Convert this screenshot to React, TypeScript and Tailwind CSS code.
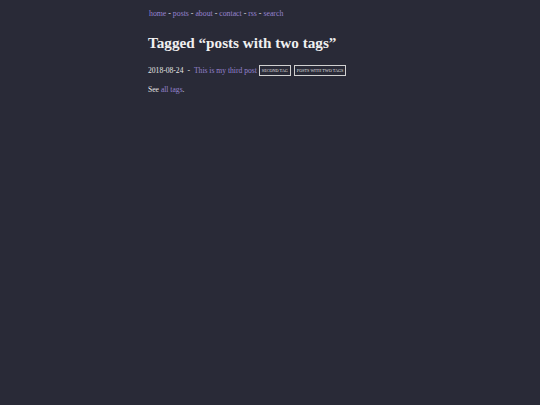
import React from "react";

const nav = ["home", "posts", "about", "contact", "rss", "search"];

function Tag({ label }: { label: string }) {
  return (
    <a className="inline-block border border-[#d0d0d0] px-[2px] py-[1px] leading-[7px] text-[4.2px] uppercase text-[#e0e0e0]">
      {label}
    </a>
  );
}

export default function App() {
  return (
    <div
      className="min-h-[405px] w-full bg-[#292a37] text-[#e4e4e4]"
      style={{ fontFamily: '"Liberation Serif", "Times New Roman", serif' }}
    >
      <div className="mx-auto w-[244px] pt-[8px] text-[7.6px]">
        <nav className="pl-[1px] text-[7.8px] leading-[11px]">
          {nav.map((item, i) => (
            <span key={item}>
              <a className="text-[#9683cf]">{item}</a>
              {i < nav.length - 1 && <span> - </span>}
            </span>
          ))}
        </nav>
        <h1 className="mt-[14px] text-[15.2px] font-bold leading-[20px] text-[#f0f0f0]">
          Tagged “posts with two tags”
        </h1>
        <ul className="mt-[12px]">
          <li className="flex items-center leading-[11px]">
            <span>2018-08-24</span>
            <span className="mx-[4px]">-</span>
            <a className="mr-[2px] text-[#9683cf]">This is my third post</a>
            <span className="flex gap-[3px]">
              <Tag label="second tag" />
              <Tag label="posts with two tags" />
            </span>
          </li>
        </ul>
        <p className="mt-[8px] leading-[11px]">
          See <a className="text-[#9683cf]">all tags</a>.
        </p>
      </div>
    </div>
  );
}
